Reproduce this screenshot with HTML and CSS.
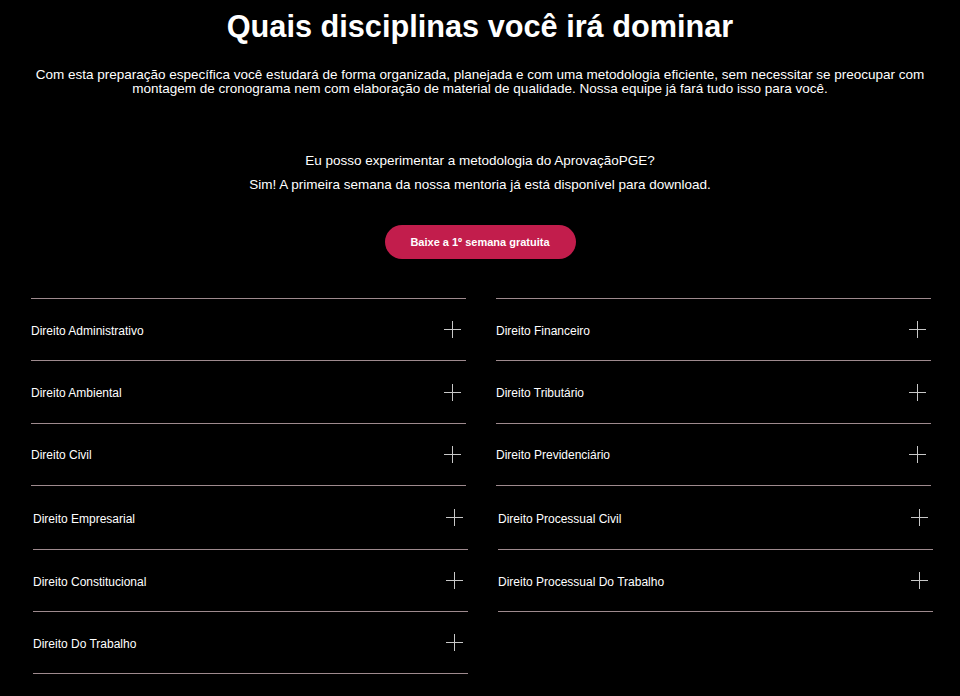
FILE: index.html
```html
<!DOCTYPE html>
<html lang="pt-BR">
<head>
<meta charset="utf-8">
<title>Quais disciplinas você irá dominar</title>
<link rel="stylesheet" href="styles.css">
</head>
<body>
<section class="section">
  <h2 class="title">Quais disciplinas você irá dominar</h2>
  <p class="lead">Com esta preparação específica você estudará de forma organizada, planejada e com uma metodologia eficiente, sem necessitar se preocupar com montagem de cronograma nem com elaboração de material de qualidade. Nossa equipe já fará tudo isso para você.</p>
  <div class="trial">
    <p>Eu posso experimentar a metodologia do AprovaçãoPGE?</p>
    <p>Sim! A primeira semana da nossa mentoria já está disponível para download.</p>
  </div>
  <div class="cta-wrap"><a class="cta" href="#">Baixe a 1º semana gratuita</a></div>

  <div class="columns">
    <div class="col">
      <div class="group">
        <div class="item"><span>Direito Administrativo</span><i class="plus"></i></div>
        <div class="item"><span>Direito Ambiental</span><i class="plus"></i></div>
        <div class="item"><span>Direito Civil</span><i class="plus"></i></div>
      </div>
      <div class="group group-b">
        <div class="item"><span>Direito Empresarial</span><i class="plus"></i></div>
        <div class="item"><span>Direito Constitucional</span><i class="plus"></i></div>
        <div class="item"><span>Direito Do Trabalho</span><i class="plus"></i></div>
      </div>
    </div>
    <div class="col">
      <div class="group">
        <div class="item"><span>Direito Financeiro</span><i class="plus"></i></div>
        <div class="item"><span>Direito Tributário</span><i class="plus"></i></div>
        <div class="item"><span>Direito Previdenciário</span><i class="plus"></i></div>
      </div>
      <div class="group group-b">
        <div class="item"><span>Direito Processual Civil</span><i class="plus"></i></div>
        <div class="item"><span>Direito Processual Do Trabalho</span><i class="plus"></i></div>
      </div>
    </div>
  </div>
</section>
</body>
</html>
```

FILE: styles.css
```css
* { box-sizing: border-box; }

html, body {
  margin: 0;
  padding: 0;
  background: #000;
  color: #fff;
  font-family: "Liberation Sans", Arial, sans-serif;
}

.section {
  width: 960px;
  padding: 9px 0 0;
}

.title {
  margin: 0;
  font-size: 30.7px;
  line-height: 36px;
  font-weight: 700;
  text-align: center;
}

.lead {
  margin: 23px auto 0;
  width: 900px;
  font-size: 13.5px;
  line-height: 14px;
  text-align: center;
}

.trial {
  margin-top: 53px;
  text-align: center;
  font-size: 13.5px;
  line-height: 24px;
}

.trial p { margin: 0; }

.cta-wrap {
  display: flex;
  justify-content: center;
  margin-top: 28px;
}

.cta {
  display: block;
  width: 191px;
  height: 34px;
  line-height: 34px;
  border-radius: 17px;
  background: #c21d4c;
  color: #fff;
  font-size: 11px;
  font-weight: 700;
  text-align: center;
  text-decoration: none;
}

.columns {
  display: grid;
  grid-template-columns: 435px 435px;
  column-gap: 30px;
  padding-left: 31px;
  margin-top: 39px;
}

.group {
  border-top: 1px solid #9e8a8e;
}

.group-b {
  border-top: 0;
  margin-left: 2px;
  margin-right: -2px;
}

.item {
  display: flex;
  align-items: center;
  justify-content: space-between;
  height: 62.4px;
  border-bottom: 1px solid #9e8a8e;
  padding-top: 2px;
  padding-right: 5px;
  font-size: 12px;
}

.group-b .item { height: 62px; }
.group-b .item:first-child { height: 64px; }

.plus {
  position: relative;
  display: block;
  width: 17px;
  height: 17px;
  margin-top: -2px;
}

.plus::before,
.plus::after {
  content: "";
  position: absolute;
  background: #c8c8c8;
}

.plus::before {
  left: 0;
  right: 0;
  top: 8px;
  height: 1px;
}

.plus::after {
  top: 0;
  bottom: 0;
  left: 8px;
  width: 1px;
}
```
